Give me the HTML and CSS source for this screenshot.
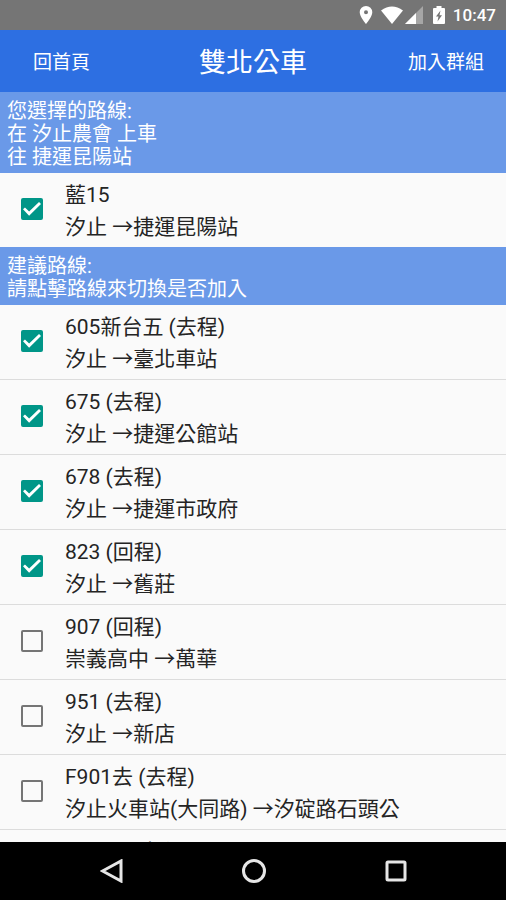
FILE: index.html
```html
<!DOCTYPE html>
<html lang="zh-Hant">
<head>
<meta charset="utf-8">
<meta name="viewport" content="width=device-width, initial-scale=1">
<title>雙北公車</title>
<link rel="stylesheet" href="styles.css">
</head>
<body>
<div class="status-bar">
  <svg class="status-pin" width="14" height="18" viewBox="0 0 14 18" aria-hidden="true"><path fill="#fff" fill-rule="evenodd" d="M7 0a6.3 6.3 0 0 0-6.3 6.300C.7 11 7 18 7 18s6.300-7 6.300-11.700A6.300 6.300 0 0 0 7 0zm0 4.300a2 2 0 1 1 0 4A2 2 0 0 1 7 4.300z"/></svg>
  <svg class="status-wifi" width="22" height="18" viewBox="0 0 22 18" aria-hidden="true"><path fill="#fff" d="M0 4.500Q11-3.500 22 4.500L11 18z"/></svg>
  <svg class="status-signal" width="18" height="18" viewBox="0 0 18 18" aria-hidden="true"><path fill="#a6a6a6" d="M18 0v18H0z"/><path fill="#fff" d="M11 7v11H0z"/></svg>
  <svg class="status-battery" width="12" height="18" viewBox="0 0 12 18" aria-hidden="true"><path fill="#fff" d="M3.500 0h5v2H11q1 0 1 1v14q0 1-1 1H1q-1 0-1-1V3q0-1 1-1h2.500z"/><path fill="#757575" d="M7.500 4.500 3 10.500h2.500L4.500 15.500 9 9.300H6.500z"/></svg>
  <time>10:47</time>
</div>
<header class="app-bar">
  <button class="app-action" type="button">回首頁</button>
  <h1>雙北公車</h1>
  <button class="app-action app-action-end" type="button">加入群組</button>
</header>
<main class="routes">
  <h2 class="section">您選擇的路線:<br>在 汐止農會 上車<br>往 捷運昆陽站</h2>
  <ul>
    <li><label class="route"><input type="checkbox" checked><span>藍15<br>汐止 →捷運昆陽站</span></label></li>
  </ul>
  <h2 class="section">建議路線:<br>請點擊路線來切換是否加入</h2>
  <ul>
    <li><label class="route"><input type="checkbox" checked><span>605新台五 (去程)<br>汐止 →臺北車站</span></label></li>
    <li><label class="route"><input type="checkbox" checked><span>675 (去程)<br>汐止 →捷運公館站</span></label></li>
    <li><label class="route"><input type="checkbox" checked><span>678 (去程)<br>汐止 →捷運市政府</span></label></li>
    <li><label class="route"><input type="checkbox" checked><span>823 (回程)<br>汐止 →舊莊</span></label></li>
    <li><label class="route"><input type="checkbox"><span>907 (回程)<br>崇義高中 →萬華</span></label></li>
    <li><label class="route"><input type="checkbox"><span>951 (去程)<br>汐止 →新店</span></label></li>
    <li><label class="route"><input type="checkbox"><span>F901去 (去程)<br>汐止火車站(大同路) →汐碇路石頭公</span></label></li>
    <li><label class="route"><input type="checkbox"><span>N9031 (去程)</span></label></li>
  </ul>
</main>
<nav class="system-nav">
  <button type="button" aria-label="返回"><svg width="24" height="24" viewBox="0 0 24 24"><path d="M21 2v20L2.500 12z"/></svg></button>
  <button type="button" aria-label="主畫面"><svg width="24" height="24" viewBox="0 0 24 24"><circle cx="12" cy="12" r="10.500"/></svg></button>
  <button type="button" aria-label="概覽"><svg width="24" height="24" viewBox="0 0 24 24"><rect x="3" y="3" width="18" height="18" rx="1"/></svg></button>
</nav>
</body>
</html>
```
FILE: styles.css
```css
* {
  box-sizing: border-box;
}

body {
  display: flex;
  flex-direction: column;
  height: 100vh;
  margin: 0;
  background: #fafafa;
  color: #242424;
  font-family: Roboto, "Noto Sans CJK TC", sans-serif;
}

button {
  padding: 0;
  border: 0;
  background: none;
  color: inherit;
  font: inherit;
}

.status-bar {
  display: flex;
  flex: none;
  align-items: center;
  justify-content: flex-end;
  height: 30px;
  padding: 0 10px;
  background: #757575;
  color: #fff;
  font-size: 17px;
  font-weight: 500;
}

.status-wifi {
  margin-left: 8px;
}

.status-signal {
  margin-left: 2px;
}

.status-battery {
  margin: 0 8px 0 10px;
}

.app-bar {
  display: grid;
  flex: none;
  grid-template-columns: 1fr auto 1fr;
  align-items: center;
  height: 62px;
  padding: 0 22px 2px;
  background: #2d6fe2;
  color: #fff;
}

.app-bar h1 {
  margin: 0;
  font-size: 27px;
  font-weight: 400;
}

.app-action {
  justify-self: start;
  padding-left: 11px;
  font-size: 19px;
}

.app-action-end {
  justify-self: end;
}

.routes {
  flex: 1;
  min-height: 0;
  overflow: hidden;
}

.section {
  margin: 0;
  padding: 8px 7px 4px;
  background: #6a99e8;
  color: #fff;
  font-size: 20px;
  font-weight: 400;
  line-height: 23px;
}

.routes ul {
  margin: 0;
  padding: 0;
  list-style: none;
}

.routes li + li {
  border-top: 1px solid #dcdcdc;
}

.route {
  display: flex;
  align-items: center;
  gap: 22px;
  min-height: 74px;
  padding: 6px 21px 4px;
  font-size: 21px;
  line-height: 32px;
}

.route span {
  align-self: flex-start;
}

.route input {
  flex: none;
  width: 22px;
  height: 22px;
  margin: 0 0 4px;
  border: 2px solid #757575;
  border-radius: 2px;
  appearance: none;
}

.route input:checked {
  border-color: #009688;
  background: #009688;
}

.route input:checked::before {
  display: block;
  width: 18px;
  height: 18px;
  background: #fff;
  clip-path: polygon(0 52%, 11% 41%, 34% 64%, 89% 11%, 100% 22%, 34% 87%);
  content: "";
}

.system-nav {
  display: flex;
  flex: none;
  align-items: center;
  justify-content: center;
  gap: 118px;
  height: 58px;
  padding-left: 2px;
  background: #000;
}

.system-nav button,
.system-nav svg {
  display: block;
}

.system-nav svg {
  fill: none;
  stroke: #e6e6e6;
  stroke-width: 3;
}
```
